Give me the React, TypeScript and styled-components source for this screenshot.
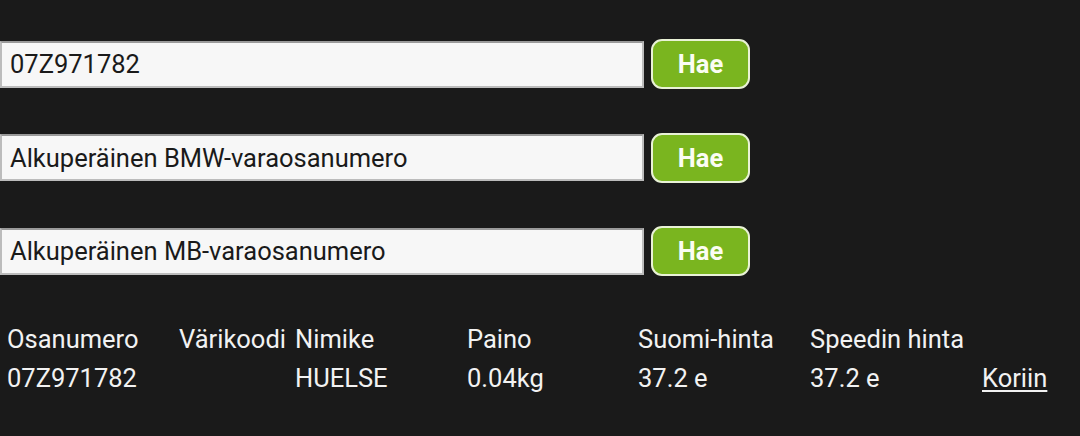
import React from 'react';
import styled, { createGlobalStyle } from 'styled-components';

const GlobalStyle = createGlobalStyle`
  html, body {
    margin: 0;
    padding: 0;
    background: #1a1a1a;
  }
  body {
    font-family: Roboto, "Noto Sans", sans-serif;
    color: #f2f2f2;
  }
`;

const Page = styled.div`
  width: 1080px;
  height: 436px;
  background: #1a1a1a;
  padding-top: 39px;
  box-sizing: border-box;
`;

const SearchList = styled.div`
  display: flex;
  flex-direction: column;
  gap: 43.5px;
`;

const SearchRow = styled.form`
  display: flex;
  align-items: center;
  gap: 7px;
  height: 50px;
  margin: 0;
`;

const SearchInput = styled.input`
  width: 644px;
  height: 47px;
  box-sizing: border-box;
  padding: 0 8px;
  border: 2px solid #bcbcbc;
  border-top-color: #9a9a9a;
  background: #f7f7f7;
  color: #1a1a1a;
  font-family: Roboto, "Noto Sans", sans-serif;
  font-size: 25.5px;
  outline: none;
`;

const SearchButton = styled.button`
  width: 99px;
  height: 50px;
  box-sizing: border-box;
  border: 2px solid #e9f2d6;
  border-radius: 11px;
  background: #7ab51f;
  color: #fbfdf3;
  font-family: Roboto, "Noto Sans", sans-serif;
  font-weight: 700;
  font-size: 25.5px;
  cursor: pointer;
`;

const Results = styled.div`
  margin-top: 43px;
  padding-left: 7px;
  display: grid;
  grid-template-columns: 172px 116px 172px 171px 172px 172px auto;
  grid-auto-rows: 39px;
  align-items: center;
  font-size: 25.5px;
  color: #f2f2f2;
`;

const Cell = styled.div`
  white-space: nowrap;
`;

const CartLink = styled.a`
  color: #f2f2f2;
  text-decoration: underline;
  text-underline-offset: 3px;
  cursor: pointer;
`;

const searches = ['07Z971782', 'Alkuperäinen BMW-varaosanumero', 'Alkuperäinen MB-varaosanumero'];

const headers = ['Osanumero', 'Värikoodi', 'Nimike', 'Paino', 'Suomi-hinta', 'Speedin hinta', ''];

const rows = [
  { part: '07Z971782', color: '', name: 'HUELSE', weight: '0.04kg', fiPrice: '37.2 e', price: '37.2 e' },
];

const App: React.FC = () => (
  <>
    <GlobalStyle />
    <Page>
      <SearchList>
        {searches.map((value) => (
          <SearchRow key={value} onSubmit={(e) => e.preventDefault()}>
            <SearchInput defaultValue={value} />
            <SearchButton type="submit">Hae</SearchButton>
          </SearchRow>
        ))}
      </SearchList>
      <Results>
        {headers.map((h, i) => (
          <Cell key={`h${i}`}>{h}</Cell>
        ))}
        {rows.map((r) => (
          <React.Fragment key={r.part}>
            <Cell>{r.part}</Cell>
            <Cell>{r.color}</Cell>
            <Cell>{r.name}</Cell>
            <Cell>{r.weight}</Cell>
            <Cell>{r.fiPrice}</Cell>
            <Cell>{r.price}</Cell>
            <Cell>
              <CartLink>Koriin</CartLink>
            </Cell>
          </React.Fragment>
        ))}
      </Results>
    </Page>
  </>
);

export default App;
